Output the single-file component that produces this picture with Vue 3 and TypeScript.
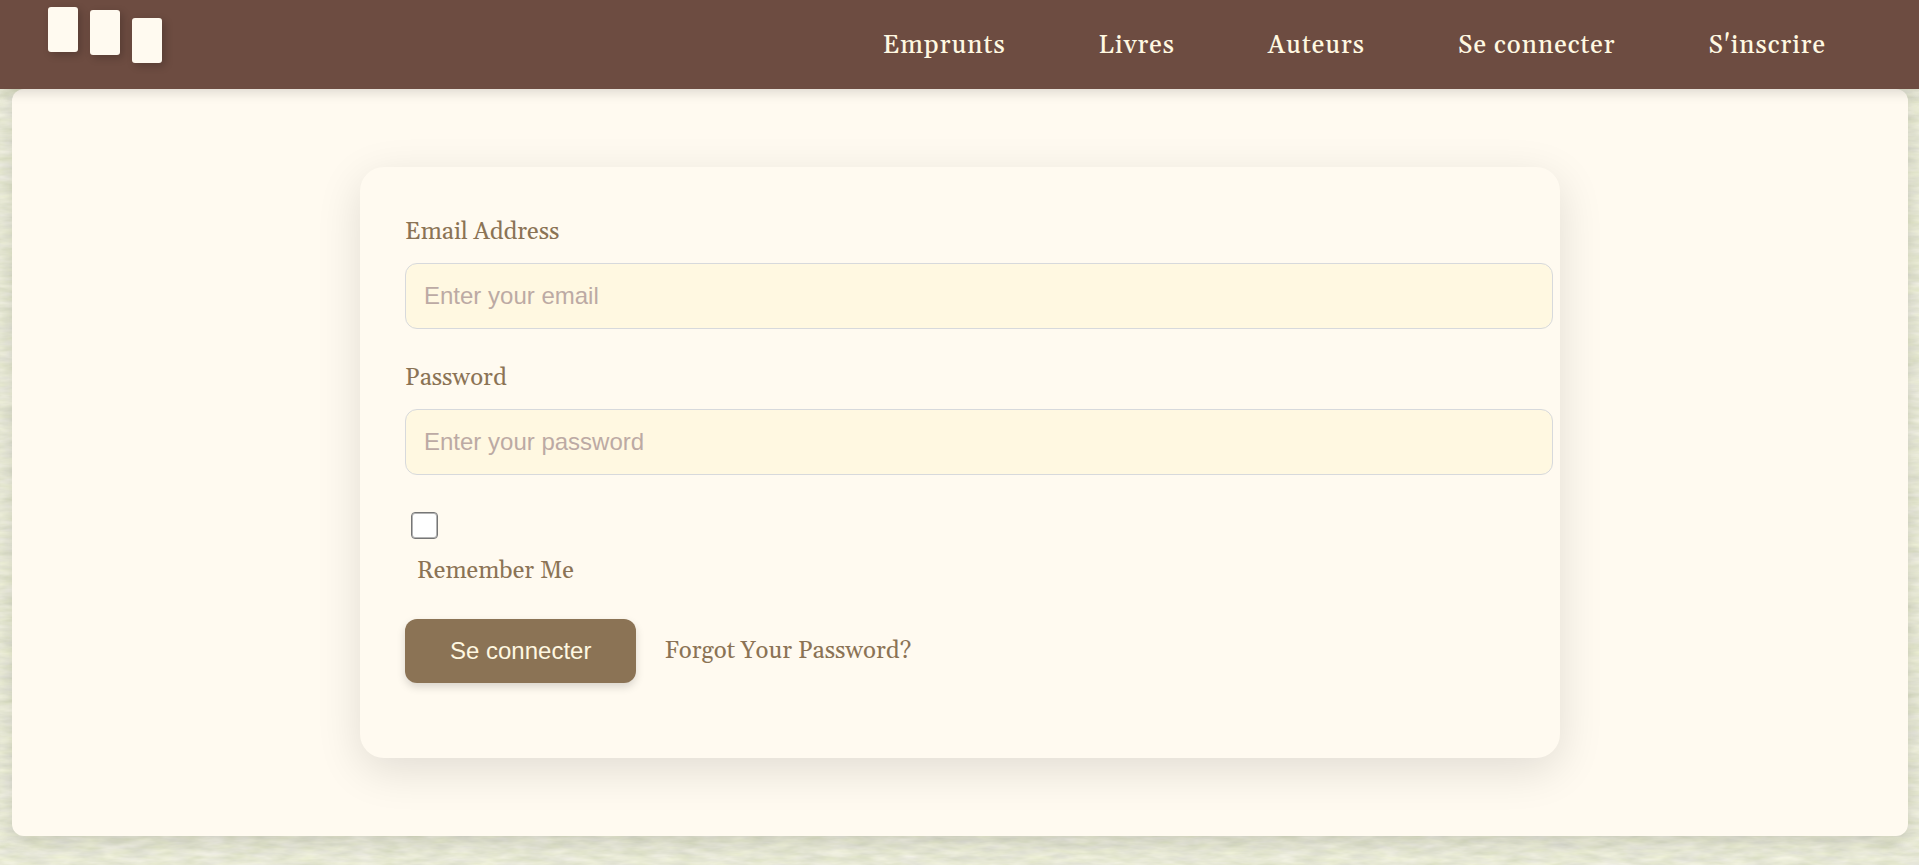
<script setup lang="ts">
import { ref } from 'vue'

interface NavLink {
  label: string
  href: string
}

const links: NavLink[] = [
  { label: 'Emprunts', href: '#emprunts' },
  { label: 'Livres', href: '#livres' },
  { label: 'Auteurs', href: '#auteurs' },
  { label: 'Se connecter', href: '#login' },
  { label: "S'inscrire", href: '#register' },
]

const email = ref('')
const password = ref('')
const remember = ref(false)
</script>

<template>
  <div class="page">
    <svg class="paper" aria-hidden="true">
      <filter id="grain" x="0" y="0" width="100%" height="100%" color-interpolation-filters="sRGB">
        <feTurbulence type="fractalNoise" baseFrequency="0.04 0.16" numOctaves="3" seed="7" />
        <feColorMatrix
          values="0.13 0.03 0 0 0.825
                  0.12 0.01 0 0 0.845
                  0.12 0.10 0 0 0.725
                  0 0 0 0 1"
        />
      </filter>
      <rect width="100%" height="100%" filter="url(#grain)" />
    </svg>

    <header class="topbar">
      <a class="logo" href="#accueil" aria-label="Accueil">
        <span class="book first"></span>
        <span class="book second"></span>
        <span class="book third"></span>
      </a>
      <nav class="nav">
        <a v-for="link in links" :key="link.href" :href="link.href">{{ link.label }}</a>
      </nav>
    </header>

    <main class="content">
      <form class="card" @submit.prevent>
        <div class="field">
          <label for="email">Email Address</label>
          <input id="email" v-model="email" class="text" type="email" placeholder="Enter your email" />
        </div>
        <div class="field">
          <label for="password">Password</label>
          <input id="password" v-model="password" class="text" type="password" placeholder="Enter your password" />
        </div>
        <div class="remember">
          <input id="remember" v-model="remember" type="checkbox" />
          <label for="remember">Remember Me</label>
        </div>
        <div class="actions">
          <button type="submit">Se connecter</button>
          <a href="#forgot">Forgot Your Password?</a>
        </div>
      </form>
    </main>
  </div>
</template>

<style>
body {
  margin: 0;
  background: #e7e8d4;
}
</style>

<style scoped>
.page {
  position: relative;
  min-height: 100vh;
  box-sizing: border-box;
  padding-bottom: 29px;
  overflow: hidden;
  font-family: Georgia, Gelasio, "Liberation Serif", serif;
  font-size: 24px;
  line-height: 36px;
  color: #8b7355;
}

.paper {
  position: absolute;
  inset: 0;
  width: 100%;
  height: 100%;
}

.topbar {
  position: relative;
  z-index: 2;
  display: flex;
  align-items: center;
  justify-content: space-between;
  height: 89px;
  padding: 0 93px 0 48px;
  background: #6d4c41;
  box-shadow: 0 3px 12px rgba(0, 0, 0, 0.15);
}

.logo {
  display: flex;
  align-self: flex-start;
  gap: 12px;
  padding-top: 7px;
}

.book {
  width: 30px;
  height: 45px;
  border-radius: 3px;
  background: #fffaf0;
  box-shadow: 3px 3px 8px rgba(0, 0, 0, 0.2);
}

.second {
  margin-top: 3px;
}

.third {
  margin-top: 11px;
}

.nav {
  display: flex;
  gap: 93px;
  padding-top: 2px;
}

.nav a {
  font-size: 25px;
  font-weight: 500;
  letter-spacing: 1px;
  color: #fff8e1;
  text-decoration: none;
}

.content {
  position: relative;
  display: flex;
  justify-content: center;
  margin: 0 11px 0 12px;
  padding: 78px 24px;
  border-radius: 12px;
  background: #fffaf0;
  box-shadow: 0 6px 18px rgba(0, 0, 0, 0.12);
}

.card {
  box-sizing: border-box;
  width: 100%;
  max-width: 1200px;
  padding: 47px 7px 75px 45px;
  border-radius: 24px;
  background: #fffaf0;
  box-shadow: 0 12px 45px rgba(0, 0, 0, 0.12);
}

.field {
  display: flex;
  flex-direction: column;
  gap: 13px;
  margin-bottom: 31px;
}

.text {
  box-sizing: border-box;
  width: 100%;
  height: 66px;
  padding: 0 18px;
  border: 1px solid #d7d9dc;
  border-radius: 12px;
  background: #fff8e1;
  font-family: "Liberation Sans", Arial, sans-serif;
  font-size: 24px;
  color: #6d4c41;
}

.text::placeholder {
  color: #bcaaa4;
  opacity: 1;
}

.remember {
  display: flex;
  flex-direction: column;
  gap: 14px;
  padding: 6px 6px 30px;
}

.remember input {
  appearance: none;
  box-sizing: border-box;
  width: 27px;
  height: 27px;
  margin: 0;
  border: 1px solid #767676;
  border-radius: 4px;
  background: #ffffff;
  box-shadow: inset 0 0 0 1px #b4b4b4;
}

.remember input:checked {
  background: #8b7355;
  box-shadow: inset 0 0 0 5px #ffffff;
}

.remember label {
  padding-left: 6px;
}

.actions {
  display: flex;
  align-items: center;
  gap: 28px;
}

.actions button {
  height: 64px;
  padding: 0 45px;
  border: 0;
  border-radius: 12px;
  background: #8b7355;
  box-shadow: 0 4px 9px rgba(0, 0, 0, 0.15);
  font-family: "Liberation Sans", Arial, sans-serif;
  font-size: 24px;
  color: #fff8e1;
}

.actions a {
  color: #8b7355;
  text-decoration: none;
}
</style>
